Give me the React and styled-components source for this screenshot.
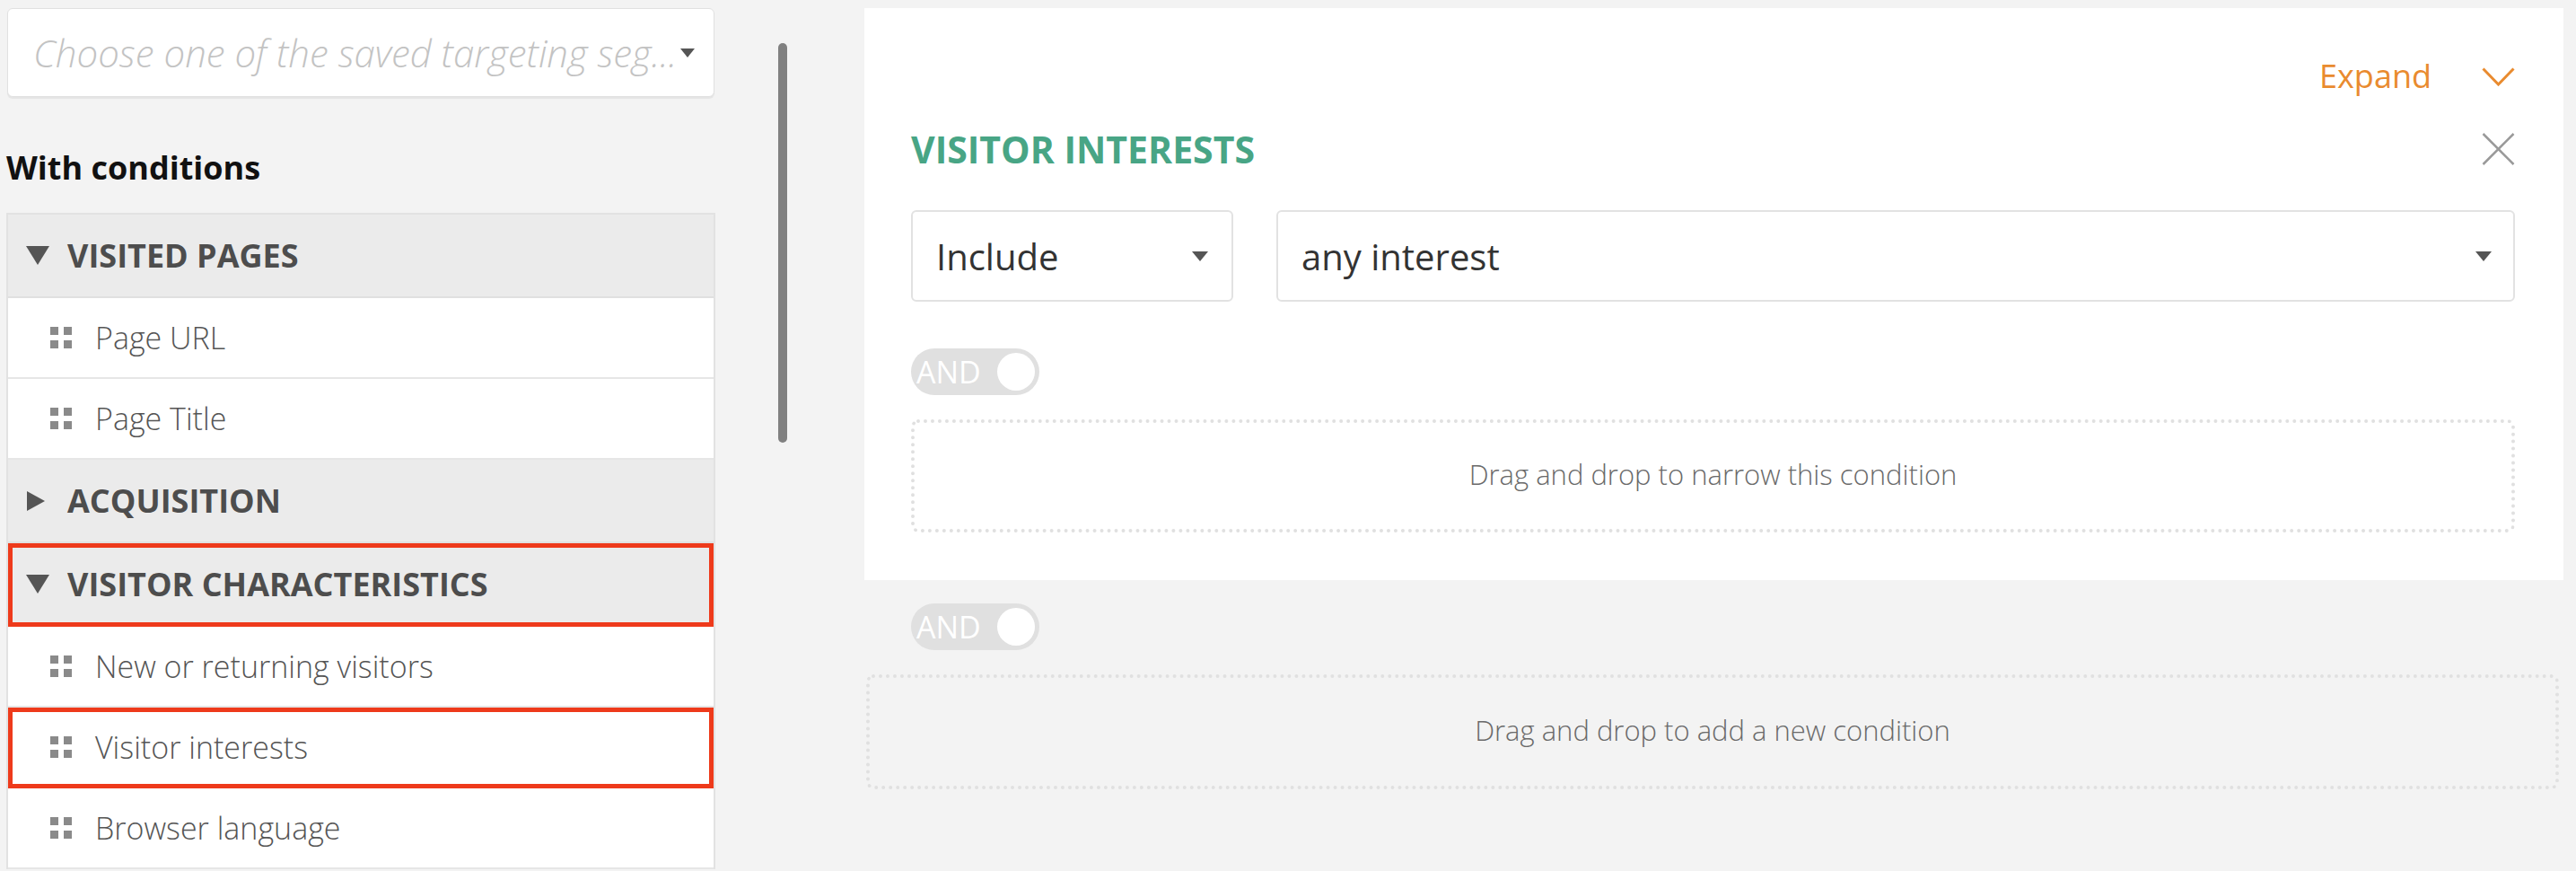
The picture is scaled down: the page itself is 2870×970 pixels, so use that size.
import React from "react";
import styled, { createGlobalStyle } from "styled-components";

const GlobalStyle = createGlobalStyle`
  html, body {
    margin: 0;
    padding: 0;
    background: #f3f3f3;
    overflow: hidden;
  }
  body {
    font-family: "Open Sans", "Liberation Sans", sans-serif;
  }
  * {
    box-sizing: border-box;
  }
`;

const Page = styled.div`
  display: flex;
  align-items: flex-start;
  width: 2870px;
  height: 970px;
  padding: 9px 14px 0 7px;
`;

const Sidebar = styled.div`
  width: 790px;
  display: flex;
  flex-direction: column;
`;

const SegmentSelect = styled.div`
  margin-left: 1px;
  width: 788px;
  height: 99px;
  background: #fff;
  border: 1px solid #e1e1e1;
  border-radius: 6px;
  box-shadow: 0 2px 1px rgba(0, 0, 0, 0.06);
  display: flex;
  align-items: center;
  justify-content: space-between;
  gap: 4px;
  padding: 0 28px;
`;

const Placeholder = styled.span`
  white-space: nowrap;
  font-style: italic;
  font-weight: 300;
  font-size: 42px;
  color: #c3c3c3;
`;

const Caret = styled.span`
  flex: none;
  width: 0;
  height: 0;
  border-left: ${(p) => p.$size / 2}px solid transparent;
  border-right: ${(p) => p.$size / 2}px solid transparent;
  border-top: ${(p) => Math.round(p.$size * 0.6)}px solid #555;
`;

const SectionTitle = styled.div`
  margin-top: 54px;
  font-weight: 700;
  font-size: 36px;
  line-height: 50px;
  color: #111;
`;

const List = styled.div`
  margin-top: 25px;
  border: 2px solid #e2e2e2;
  border-bottom: none;
`;

const GroupHeader = styled.div`
  height: 93px;
  display: flex;
  align-items: center;
  padding-left: 20px;
  background: #ebebeb;
  border-bottom: 2px solid #e0e0e0;
  font-weight: 700;
  font-size: 36px;
  color: #4d4d4d;
  ${(p) => p.$marked && "outline: 5px solid #ee3a1b; outline-offset: -5px;"}
`;

const Arrow = styled.span`
  width: 46px;
  display: flex;
  align-items: center;
  &::before {
    content: "";
    width: 0;
    height: 0;
    ${(p) =>
      p.$open
        ? `border-left: 13px solid transparent;
           border-right: 13px solid transparent;
           border-top: 21px solid #555;`
        : `margin-left: 1px;
           border-top: 11px solid transparent;
           border-bottom: 11px solid transparent;
           border-left: 20px solid #555;`}
  }
`;

const Item = styled.div`
  height: 90px;
  display: flex;
  align-items: center;
  gap: 26px;
  padding-left: 47px;
  background: #fff;
  border-bottom: 2px solid #e6e6e6;
  font-weight: 300;
  font-size: 34px;
  color: #555;
  ${(p) => p.$marked && "outline: 5px solid #ee3a1b; outline-offset: -5px;"}
`;

const Handle = styled.span`
  display: grid;
  grid-template-columns: 9px 9px;
  grid-template-rows: 9px 9px;
  gap: 6px;
  span {
    background: #8a8a8a;
  }
`;

const Gutter = styled.div`
  width: 166px;
  padding: 39px 0 0 70px;
`;

const Thumb = styled.div`
  width: 10px;
  height: 445px;
  border-radius: 5px;
  background: #808080;
`;

const Main = styled.div`
  width: 1893px;
  display: flex;
  flex-direction: column;
`;

const Card = styled.div`
  background: #fff;
  padding: 51px 54px 53px 52px;
  display: flex;
  flex-direction: column;
`;

const CardTop = styled.div`
  height: 50px;
  display: flex;
  justify-content: flex-end;
  align-items: center;
  gap: 56px;
`;

const Expand = styled.span`
  font-size: 36px;
  line-height: 50px;
  color: #e98b2f;
`;

const TitleRow = styled.div`
  margin-top: 28px;
  height: 56px;
  display: flex;
  justify-content: space-between;
  align-items: center;
`;

const Title = styled.h2`
  margin: 0;
  font-weight: 700;
  font-size: 41px;
  line-height: 56px;
  color: #48a585;
`;

const SelectRow = styled.div`
  margin-top: 40px;
  display: flex;
  gap: 48px;
`;

const Select = styled.div`
  height: 102px;
  ${(p) => (p.$width ? `width: ${p.$width}px;` : "flex: 1;")}
  border: 2px solid #e2e2e2;
  border-radius: 6px;
  display: flex;
  align-items: center;
  justify-content: space-between;
  padding: 0 ${(p) => p.$right}px 0 26px;
  font-size: 40px;
  color: #333;
`;

const Toggle = styled.div`
  margin-top: ${(p) => p.$top}px;
  margin-left: ${(p) => p.$left || 0}px;
  width: 143px;
  height: 52px;
  border-radius: 26px;
  background: #e0e0e0;
  display: flex;
  align-items: center;
  justify-content: space-between;
  padding: 0 5px 0 6px;
  font-size: 34px;
  color: #fff;
`;

const Knob = styled.span`
  width: 42px;
  height: 42px;
  border-radius: 50%;
  background: #fff;
`;

const DropZone = styled.div`
  margin: 27px ${(p) => p.$side || 0}px 0 ${(p) => (p.$side ? 2 : 0)}px;
  height: ${(p) => p.$height}px;
  border: 4px dotted #e0e0e0;
  border-radius: 8px;
  display: flex;
  align-items: center;
  justify-content: center;
  padding-bottom: 4px;
  font-weight: 300;
  font-size: 31px;
  color: #6a6a6a;
`;

const groups = [
  {
    name: "VISITED PAGES",
    open: true,
    items: ["Page URL", "Page Title"],
  },
  { name: "ACQUISITION", open: false, items: [] },
  {
    name: "VISITOR CHARACTERISTICS",
    open: true,
    marked: true,
    items: ["New or returning visitors", "Visitor interests", "Browser language"],
  },
];

function DragHandle() {
  return (
    <Handle>
      <span />
      <span />
      <span />
      <span />
    </Handle>
  );
}

function App() {
  return (
    <>
      <GlobalStyle />
      <Page>
        <Sidebar>
          <SegmentSelect>
            <Placeholder>Choose one of the saved targeting seg...</Placeholder>
            <Caret $size={16} />
          </SegmentSelect>
          <SectionTitle>With conditions</SectionTitle>
          <List>
            {groups.map((group) => (
              <React.Fragment key={group.name}>
                <GroupHeader $marked={group.marked}>
                  <Arrow $open={group.open} />
                  {group.name}
                </GroupHeader>
                {group.items.map((item) => (
                  <Item key={item} $marked={item === "Visitor interests"}>
                    <DragHandle />
                    {item}
                  </Item>
                ))}
              </React.Fragment>
            ))}
          </List>
        </Sidebar>
        <Gutter>
          <Thumb />
        </Gutter>
        <Main>
          <Card>
            <CardTop>
              <Expand>Expand</Expand>
              <svg width="37" height="21" viewBox="0 0 37 21">
                <polyline
                  points="1.5,1.5 18.5,19 35.5,1.5"
                  fill="none"
                  stroke="#e98b2f"
                  strokeWidth="3"
                />
              </svg>
            </CardTop>
            <TitleRow>
              <Title>VISITOR INTERESTS</Title>
              <svg width="37" height="36" viewBox="0 0 37 36">
                <line x1="1.5" y1="1" x2="35.5" y2="35" stroke="#999" strokeWidth="2.5" />
                <line x1="35.5" y1="1" x2="1.5" y2="35" stroke="#999" strokeWidth="2.5" />
              </svg>
            </TitleRow>
            <SelectRow>
              <Select $width={359} $right={26}>
                Include
                <Caret $size={18} />
              </Select>
              <Select $right={24}>
                any interest
                <Caret $size={18} />
              </Select>
            </SelectRow>
            <Toggle $top={52}>
              AND
              <Knob />
            </Toggle>
            <DropZone $height={126}>Drag and drop to narrow this condition</DropZone>
          </Card>
          <Toggle $top={26} $left={52}>
            AND
            <Knob />
          </Toggle>
          <DropZone $height={128} $side={5}>
            Drag and drop to add a new condition
          </DropZone>
        </Main>
      </Page>
    </>
  );
}

export default App;
